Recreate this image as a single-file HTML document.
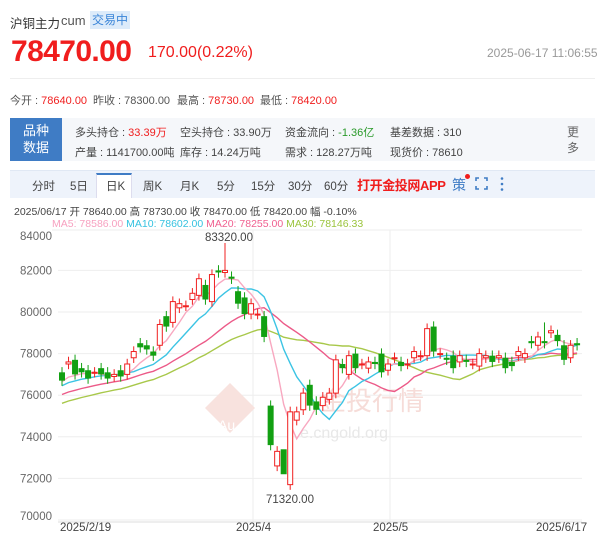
<!DOCTYPE html>
<html><head><meta charset="utf-8">
<style>
*{margin:0;padding:0;box-sizing:border-box}
body{width:600px;height:533px;background:#fff;font-family:"Liberation Sans","Noto Sans CJK SC",sans-serif;position:relative;overflow:hidden;color:#333}
.a{position:absolute;white-space:nowrap}
.r{color:#f01d1d}
.s{font-size:11px;color:#555}
</style></head><body>
<div class="a" style="left:10px;top:13px;font-size:12.5px;color:#333">沪铜主力</div>
<div class="a" style="left:61px;top:13px;font-size:13px;color:#555">cum</div>
<div class="a" style="left:90px;top:11px;width:40px;height:18px;background:#dcebfa;color:#3a85d8;font-size:12px;line-height:18px;text-align:center">交易中</div>
<div class="a r" style="left:11px;top:35px;font-size:30px;font-weight:bold;letter-spacing:-0.6px">78470.00</div>
<div class="a r" style="left:148px;top:44px;font-size:16px">170.00(0.22%)</div>
<div class="a" style="left:487px;top:46px;font-size:12px;color:#999">2025-06-17 11:06:55</div>
<div class="a" style="left:10px;top:78px;width:585px;height:1px;background:#eee"></div>
<div class="a s" style="left:10px;top:92px">今开 : <span class="r">78640.00</span></div>
<div class="a s" style="left:93px;top:92px">昨收 : 78300.00</div>
<div class="a s" style="left:177px;top:92px">最高 : <span class="r">78730.00</span></div>
<div class="a s" style="left:260px;top:92px">最低 : <span class="r">78420.00</span></div>
<div class="a" style="left:10px;top:118px;width:585px;height:43px;background:#f5f7fa"></div>
<div class="a" style="left:10px;top:118px;width:52px;height:43px;background:#3f7cc5;color:#fff;font-size:13px;line-height:17px;text-align:center;padding-top:4px">品种<br>数据</div>
<div class="a s" style="left:75px;top:123px;line-height:20px;color:#444">多头持仓 : <span class="r">33.39万</span><br>产量 : 1141700.00吨</div>
<div class="a s" style="left:180px;top:123px;line-height:20px;color:#444">空头持仓 : 33.90万<br>库存 : 14.24万吨</div>
<div class="a s" style="left:285px;top:123px;line-height:20px;color:#444">资金流向 : <span style="color:#2a9a2a">-1.36亿</span><br>需求 : 128.27万吨</div>
<div class="a s" style="left:390px;top:123px;line-height:20px;color:#444">基差数据 : 310<br>现货价 : 78610</div>
<div class="a" style="left:567px;top:124px;font-size:12px;line-height:16px;color:#666">更<br>多</div>
<div class="a" style="left:10px;top:170px;width:585px;height:28px;background:#eef3fb;border-top:1px solid #e0e8f4"></div>
<div class="a" style="left:96px;top:173px;width:36px;height:25px;background:#fff;border-top:2px solid #3f7cc5;border-left:1px solid #dde;border-right:1px solid #dde"></div>
<div class="a" style="left:0;top:178px;font-size:11.5px;color:#444;width:600px;height:20px">
<span class="a" style="left:32px">分时</span><span class="a" style="left:70px">5日</span><span class="a" style="left:106px">日K</span><span class="a" style="left:143px">周K</span><span class="a" style="left:180px">月K</span><span class="a" style="left:217px">5分</span><span class="a" style="left:251px">15分</span><span class="a" style="left:288px">30分</span><span class="a" style="left:324px">60分</span></div>
<div class="a" style="left:357px;top:175px;font-size:13px;font-weight:bold;color:#f01d1d;letter-spacing:-0.4px">打开金投网APP</div>
<div class="a" style="left:452px;top:175px;font-size:14px;color:#3f7cc5">策</div>
<div class="a" style="left:465px;top:174px;width:5px;height:5px;border-radius:50%;background:#f01d1d"></div>
<svg class="a" style="left:474px;top:176px" width="40" height="16"><path d="M2 5V2h3M10 2h3v3M13 10v3h-3M5 13H2v-3" stroke="#3f7cc5" stroke-width="1.6" fill="none"/><circle cx="28" cy="2.5" r="1.3" fill="#3f7cc5"/><circle cx="28" cy="8" r="1.3" fill="#3f7cc5"/><circle cx="28" cy="13.5" r="1.3" fill="#3f7cc5"/></svg>
<div class="a" style="left:14px;top:204px;font-size:10.5px;color:#444">2025/06/17 开 78640.00 高 78730.00 收 78470.00 低 78420.00 幅 -0.10%</div>
<div class="a" style="left:52px;top:218px;font-size:10.5px"><span style="color:#f7a1c0">MA5: 78586.00</span> <span style="color:#35c2e0">MA10: 78602.00</span> <span style="color:#f06090">MA20: 78255.00</span> <span style="color:#9bc43c">MA30: 78146.33</span></div>
<svg id="ch" class="a" style="left:0;top:0" width="600" height="533"></svg>
<script>
var s=document.getElementById('ch'),h='';
function Y(p){return 312+(80000-p)*0.0208}
h+='<line x1="52" y1="230" x2="582" y2="230" stroke="#eee"/>';
[84000,82000,80000,78000,76000,74000,72000,70000].forEach(function(p){var y=Y(p);if(p<84000)h+='<line x1="58" y1="'+y+'" x2="582" y2="'+y+'" stroke="#eee"/>';var ty=p==84000?240:(p==70000?520:y+4);h+='<text x="52" y="'+ty+'" text-anchor="end" font-size="11.5" fill="#666" font-family="Liberation Sans">'+p+'</text>'});
h+='<line x1="253" y1="230" x2="253" y2="522" stroke="#eee"/><line x1="390" y1="230" x2="390" y2="522" stroke="#eee"/><line x1="58" y1="522" x2="582" y2="522" stroke="#ddd"/>';
h+='<text x="320" y="410" font-size="26" fill="#f6dcd8" font-family="Noto Sans CJK SC">金投行情</text><text x="300" y="438" font-size="16" fill="#e8e8e8" font-family="Liberation Sans">e.cngold.org</text><path d="M230 383l25 25-25 25-25-25z" fill="#f8e2de"/><text x="218" y="430" font-size="14" fill="#fff" font-family="Liberation Sans">Au</text>';
var d=[[77100,76700],[77500,77600],[77700,77000],[77300,77100],[77200,76800],[77100,77100],[77300,77000],[77100,76800],[76900,77000],[77200,76900],[77000,77500],[77800,78100],[78500,78300],[78400,78200],[78100,77900],[78400,79400],[79800,79300],[79500,80500],[80200,80400],[80300,80300],[80600,80900],[80800,81600],[81300,80600],[80500,81800],[82000,81900],[81900,82000],[81700,81600],[81000,80400],[80700,79900],[79900,80400],[79900,79900],[79800,78800],[75500,73600],[72600,73300],[73400,72200],[71700,75200],[74800,75200],[75300,76100],[76500,75500],[75700,75300],[75500,75900],[75800,76100],[76100,77700],[77500,77300],[77000,77900],[78000,77300],[77500,77500],[77300,77600],[77600,77500],[78000,77100],[77200,77500],[77800,77800],[77600,77400],[77500,77500],[77800,78100],[77900,77900],[77900,79200],[79300,78100],[78000,78000],[77800,77700],[77900,77300],[77600,77900],[77700,77600],[77500,77500],[77400,78000],[77800,77900],[77900,77600],[77800,77900],[77800,77300],[77600,77400],[77900,78100],[77800,78000],[78600,78500],[78400,78800],[78600,78500],[79000,79100],[78900,78600],[78400,77700],[77800,78400],[78500,78400]];
var hi={25:83320,34:71320,74:79500};
var pre=[];for(var i=0;i<30;i++)pre.push(74300+i*85);
var cl=pre.concat(d.map(function(a){return a[1]}));
function X(i){return 62+i*6.52}
function ma(n,c){var pts=[];for(var i=0;i<d.length;i++){var k=i+30,sum=0;for(var j=0;j<n;j++)sum+=cl[k-j];pts.push(X(i).toFixed(1)+','+Y(sum/n).toFixed(1))}h+='<polyline points="'+pts.join(' ')+'" fill="none" stroke="'+c+'" stroke-width="1.4"/>'}
ma(30,'#a8c84a');ma(20,'#ec5a88');ma(10,'#3cc4e4');ma(5,'#f8a8c0');
d.forEach(function(a,i){var o=a[0],c=a[1],up=c>=o,x=X(i);var top=Math.max(o,c),bot=Math.min(o,c);var H=hi[i]||top+250,L=(i==34?71320:bot-250);var col=up?'#f02020':'#12a012';
h+='<line x1="'+x+'" y1="'+Y(H)+'" x2="'+x+'" y2="'+Y(L)+'" stroke="'+col+'"/>';
var y1=Y(top),hh=Math.max(1,Y(bot)-y1);
if(up)h+='<rect x="'+(x-2.5)+'" y="'+y1+'" width="5" height="'+hh+'" fill="#fff" stroke="'+col+'"/>';else h+='<rect x="'+(x-3)+'" y="'+y1+'" width="6" height="'+hh+'" fill="'+col+'"/>';});
h+='<text x="205" y="241" font-size="11.5" fill="#444" font-family="Liberation Sans">83320.00</text><text x="266" y="503" font-size="11.5" fill="#444" font-family="Liberation Sans">71320.00</text>';
[['2025/2/19',60],['2025/4',236],['2025/5',373],['2025/6/17',536]].forEach(function(t){h+='<text x="'+t[1]+'" y="531" font-size="11.5" fill="#444" font-family="Liberation Sans">'+t[0]+'</text>'});
s.innerHTML=h;
</script>
</body></html>
